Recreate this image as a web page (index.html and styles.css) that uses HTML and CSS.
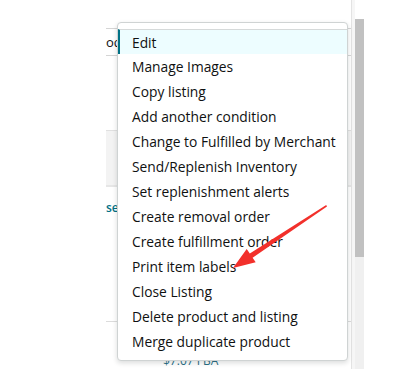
FILE: index.html
```html
<!DOCTYPE html>
<html lang="en">
<head>
    <meta charset="UTF-8">
    <title>Listing actions</title>
    <link rel="stylesheet" href="styles.css">
</head>
<body>
    <div class="page">
        <div class="gutter"></div>
        <div class="content">
            <div class="top-space"></div>
            <div class="search"><span class="search-text">od</span></div>
            <div class="band"></div>
            <div class="link-row"><span class="link">se</span></div>
            <div class="price-row"><span class="price">$7.07 FBA</span></div>
        </div>
        <div class="edge"></div>
        <div class="scroll">
            <div class="scroll-top"></div>
            <div class="thumb"></div>
            <div class="track"></div>
        </div>
    </div>

    <ul class="menu">
        <li class="menu-item active">Edit</li>
        <li class="menu-item">Manage Images</li>
        <li class="menu-item">Copy listing</li>
        <li class="menu-item">Add another condition</li>
        <li class="menu-item">Change to Fulfilled by Merchant</li>
        <li class="menu-item">Send/Replenish Inventory</li>
        <li class="menu-item">Set replenishment alerts</li>
        <li class="menu-item">Create removal order</li>
        <li class="menu-item">Create fulfillment order</li>
        <li class="menu-item">Print item labels</li>
        <li class="menu-item">Close Listing</li>
        <li class="menu-item">Delete product and listing</li>
        <li class="menu-item">Merge duplicate product</li>
    </ul>

    <svg class="arrow" width="404" height="369" viewBox="0 0 404 369">
        <polygon points="326.2,205 327,206.6 252.6,257.8 255.7,262.3 233,268 246.7,249.1 249.8,253.6" fill="#f2302b"/>
    </svg>
</body>
</html>
```

FILE: styles.css
```css
* {
    margin: 0;
    padding: 0;
    box-sizing: border-box;
}

body {
    font-family: 'Open Sans', 'Noto Sans', sans-serif;
    background: white;
    color: #0f1111;
    width: 404px;
    height: 369px;
    overflow: hidden;
    position: relative;
}

.page {
    display: flex;
    height: 369px;
}

.gutter {
    width: 106px;
}

.content {
    width: 246px;
    border-right: 1px solid #e3e3e3;
    overflow: hidden;
    display: flex;
    flex-direction: column;
}

.top-space {
    height: 29px;
}

.search {
    height: 29px;
    border-top: 1px solid #d5d5d5;
    border-bottom: 1px solid #d5d5d5;
    display: flex;
    align-items: center;
    font-size: 13px;
}

.band {
    margin-top: 74px;
    height: 60px;
    background: #f3f3f3;
    border-top: 1px solid #e0e0e0;
    border-bottom: 2px solid #e6e6e6;
}

.link-row {
    height: 140px;
    padding-top: 12px;
    border-bottom: 1px solid #dcdcdc;
    font-size: 12px;
}

.link {
    color: #007185;
    font-weight: 600;
}

.price-row {
    padding-top: 30px;
    padding-left: 57px;
    font-size: 12px;
}

.price {
    color: #2a6f86;
}

.edge {
    width: 3px;
    background: #f6f6f6;
}

.scroll {
    width: 9px;
    display: flex;
    flex-direction: column;
}

.scroll-top {
    height: 19px;
}

.thumb {
    height: 238px;
    background: #c1c1c1;
}

.track {
    flex: 1;
    background: #f0f0f0;
}

.menu {
    position: absolute;
    left: 117px;
    top: 22px;
    width: 231px;
    list-style: none;
    background: white;
    border: 1px solid #cfd3d3;
    border-radius: 4px;
    box-shadow: 0 2px 5px rgba(15,17,17,0.15);
    padding: 6px 0 6px;
    font-size: 13.8px;
}

.menu-item {
    height: 25px;
    line-height: 26px;
    padding-left: 14px;
    white-space: nowrap;
}

.menu-item.active {
    background: #edfdff;
    border-top: 1px solid #d5d9d9;
    border-left: 2px solid #007185;
    padding-left: 12px;
    line-height: 25px;
}

.arrow {
    position: absolute;
    left: 0;
    top: 0;
}
```
